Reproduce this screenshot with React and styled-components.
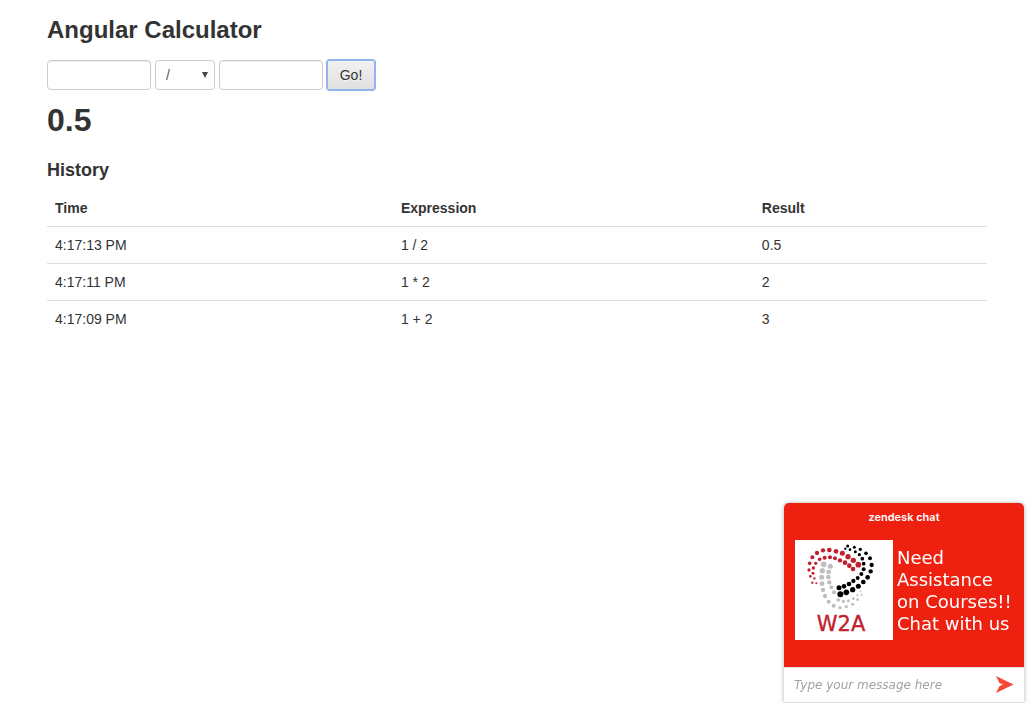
import React from 'react';
import styled, { createGlobalStyle } from 'styled-components';

const GlobalStyle = createGlobalStyle`
  *, *::before, *::after { box-sizing: border-box; }
  body {
    margin: 0;
    background: #fff;
    color: #333;
    font: 14px/20px "Liberation Sans", Arial, sans-serif;
  }
`;

const Container = styled.main`
  max-width: 940px;
  margin: 0 auto;
  padding: 10px 0;
  @media (max-width: 960px) {
    margin: 0 20px;
  }
`;

const Heading = styled.h1`
  margin: 0 0 10px;
  font-size: ${(p) => (p.$large ? 32 : 24)}px;
  line-height: 40px;
  font-weight: 700;
`;

const SubHeading = styled.h2`
  margin: 20px 0 10px;
  font-size: 18px;
  line-height: 20px;
  font-weight: 700;
`;

const Form = styled.form`
  display: flex;
  flex-wrap: wrap;
  gap: 4px;
  margin-bottom: 10px;
`;

const NumberField = styled.input`
  width: 104px;
  height: 30px;
  padding: 4px 6px;
  border: 1px solid #ccc;
  border-radius: 4px;
  box-shadow: inset 0 1px 1px rgba(0, 0, 0, 0.075);
  font: inherit;
  color: #555;
  background: #fff;
`;

const SelectBox = styled.div`
  display: grid;
  align-items: center;
  width: 60px;
  height: 30px;
  & > * {
    grid-area: 1 / 1;
  }
`;

const OperatorSelect = styled.select`
  appearance: none;
  width: 100%;
  height: 100%;
  padding: 4px 10px;
  border: 1px solid #ccc;
  border-radius: 4px;
  background: #fff;
  color: #555;
  font: inherit;
`;

const Arrow = styled.svg`
  justify-self: end;
  margin-right: 7px;
  pointer-events: none;
`;

const GoButton = styled.button`
  width: 48px;
  height: 30px;
  padding: 4px 0;
  border: 1px solid #8fb4ee;
  border-radius: 2px;
  outline: 1px solid #8fb4ee;
  background: linear-gradient(#f2f2f2, #e0e0e0);
  color: #333;
  font: inherit;
  text-shadow: 0 1px 1px rgba(255, 255, 255, 0.75);
`;

const HistoryTable = styled.table`
  width: 100%;
  table-layout: fixed;
  border-collapse: collapse;
`;

const Column = styled.col`
  width: ${(p) => p.$share}%;
`;

const HeadCell = styled.th`
  padding: 8px;
  text-align: left;
`;

const Cell = styled.td`
  padding: 8px;
  border-top: 1px solid #ddd;
`;

const ChatWidget = styled.aside`
  position: fixed;
  right: 10px;
  bottom: 0;
  width: 240px;
  border-radius: 5px 5px 0 0;
  box-shadow: 0 0 4px rgba(0, 0, 0, 0.3);
  background: #fff;
  font-family: "DejaVu Sans", Verdana, sans-serif;
`;

const ChatHeader = styled.header`
  height: 164px;
  padding: 4px 11px 0;
  border-radius: 5px 5px 0 0;
  background: #ee2010;
  color: #fff;
`;

const ChatBrand = styled.div`
  text-align: center;
  font: 600 11px/20px Inter, sans-serif;
`;

const ChatBanner = styled.div`
  display: flex;
  align-items: center;
  gap: 4px;
  margin-top: 13px;
`;

const Logo = styled.svg`
  flex: none;
  background: #fff;
`;

const ChatPitch = styled.p`
  margin: 0;
  padding-top: 2px;
  font-size: 18px;
  line-height: 22px;
  white-space: nowrap;
`;

const MessageForm = styled.form`
  display: flex;
  align-items: center;
  height: 36px;
  padding: 0 10px;
  border: solid #ddd;
  border-width: 1px 0;
`;

const MessageField = styled.input`
  flex: 1;
  min-width: 0;
  padding: 0;
  border: 0;
  outline: 0;
  background: none;
  font: italic 12px/20px "DejaVu Sans", Verdana, sans-serif;
  color: #333;
  &::placeholder {
    color: #a3a3a3;
    opacity: 1;
  }
`;

const SendButton = styled.button`
  display: flex;
  padding: 0;
  border: 0;
  background: none;
`;

const history = [
  { time: '4:17:13 PM', expression: '1 / 2', result: '0.5' },
  { time: '4:17:11 PM', expression: '1 * 2', result: '2' },
  { time: '4:17:09 PM', expression: '1 + 2', result: '3' },
];

// Each arc of the logo is a run of [x, y, radius] dots.
const arcs = [
  {
    color: '#bebebe',
    dots: [
      [101, 88, 8.5], [97, 107, 8], [95, 127, 7.5], [96, 146, 7], [99, 165, 6.5],
      [105, 183, 6.5], [116, 200, 6], [131, 212, 6], [150, 218, 5], [169, 215, 5],
      [188, 208, 4.5], [203, 194, 4], [215, 179, 3], [121, 94, 7.5], [116, 111, 7],
      [115, 126, 7], [118, 142, 6.5], [124, 157, 6], [132, 172, 6], [145, 195, 5.5],
      [160, 199, 5], [175, 197, 4.5], [190, 191, 4], [202, 181, 3], [212, 169, 2.5],
    ],
  },
  {
    color: '#c0202e',
    dots: [
      [67, 143, 3.5], [61, 124, 4], [57, 105, 5], [59, 85, 5.5], [67, 67, 6],
      [81, 54, 6.5], [99, 46, 6.5], [118, 45, 7], [138, 49, 7], [157, 55, 7.5],
      [174, 65, 8], [190, 76, 8], [205, 89, 8.5], [79, 145, 3], [73, 130, 3.5],
      [69, 115, 4.5], [70, 99, 5], [77, 85, 5], [89, 73, 5.5], [104, 68, 6],
      [120, 67, 6], [135, 70, 6], [150, 76, 6.5], [165, 83, 7], [178, 92, 7],
      [189, 102, 7],
    ],
  },
  {
    color: '#000',
    dots: [
      [173, 33, 4.5], [193, 37, 4.5], [211, 43, 5], [228, 55, 5.5], [240, 70, 6],
      [245, 90, 6.5], [242, 109, 6.5], [233, 127, 7], [220, 141, 7], [205, 154, 7.5],
      [188, 164, 8], [169, 172, 8.5], [151, 178, 9], [166, 41, 3.5], [180, 44, 4],
      [196, 50, 4.5], [208, 59, 5], [217, 71, 5.5], [221, 86, 5.5], [221, 103, 6],
      [214, 117, 6], [203, 129, 6], [190, 138, 6.5], [177, 147, 7], [162, 154, 7],
      [147, 158, 7.5],
    ],
  },
];

function BrandLogo() {
  return (
    <Logo width="98" height="100" viewBox="15 15 294 300" role="img" aria-label="W2A">
      {arcs.map(({ color, dots }) => (
        <g key={color} fill={color}>
          {dots.map(([x, y, r]) => (
            <circle key={`${x}-${y}`} cx={x} cy={y} r={r} />
          ))}
        </g>
      ))}
      <text
        x="153"
        y="289"
        textAnchor="middle"
        fontFamily="'DejaVu Sans', sans-serif"
        fontSize="63"
        fill="#c0202e"
        stroke="#c0202e"
        strokeWidth="1"
      >
        W2A
      </text>
    </Logo>
  );
}

export default function App() {
  const stop = (event) => event.preventDefault();
  return (
    <>
      <GlobalStyle />
      <Container>
        <Heading>Angular Calculator</Heading>
        <Form onSubmit={stop}>
          <NumberField type="text" aria-label="First number" />
          <SelectBox>
            <OperatorSelect aria-label="Operator" defaultValue="/">
              <option>+</option>
              <option>-</option>
              <option>*</option>
              <option>/</option>
              <option>%</option>
            </OperatorSelect>
            <Arrow width="6" height="6" viewBox="0 0 6 6" aria-hidden="true">
              <path d="M0 0h6L3 6z" fill="#444" />
            </Arrow>
          </SelectBox>
          <NumberField type="text" aria-label="Second number" />
          <GoButton type="submit">Go!</GoButton>
        </Form>
        <Heading as="h2" $large>0.5</Heading>
        <SubHeading>History</SubHeading>
        <HistoryTable>
          <colgroup>
            <Column $share={36.8} />
            <Column $share={38.4} />
            <Column $share={24.8} />
          </colgroup>
          <thead>
            <tr>
              <HeadCell scope="col">Time</HeadCell>
              <HeadCell scope="col">Expression</HeadCell>
              <HeadCell scope="col">Result</HeadCell>
            </tr>
          </thead>
          <tbody>
            {history.map((row) => (
              <tr key={row.time}>
                <Cell>{row.time}</Cell>
                <Cell>{row.expression}</Cell>
                <Cell>{row.result}</Cell>
              </tr>
            ))}
          </tbody>
        </HistoryTable>
      </Container>
      <ChatWidget aria-label="Chat">
        <ChatHeader>
          <ChatBrand>zendesk chat</ChatBrand>
          <ChatBanner>
            <BrandLogo />
            <ChatPitch>
              Need<br />Assistance<br />on Courses!!<br />Chat with us
            </ChatPitch>
          </ChatBanner>
        </ChatHeader>
        <MessageForm onSubmit={stop}>
          <MessageField type="text" placeholder="Type your message here" aria-label="Message" />
          <SendButton type="submit" aria-label="Send">
            <svg width="18" height="18" viewBox="0 0 18 18" aria-hidden="true">
              <path d="M0 0L17.5 8.5L0 17L3.5 10L7 8.5L3.5 7z" fill="#f4483a" />
            </svg>
          </SendButton>
        </MessageForm>
      </ChatWidget>
    </>
  );
}
